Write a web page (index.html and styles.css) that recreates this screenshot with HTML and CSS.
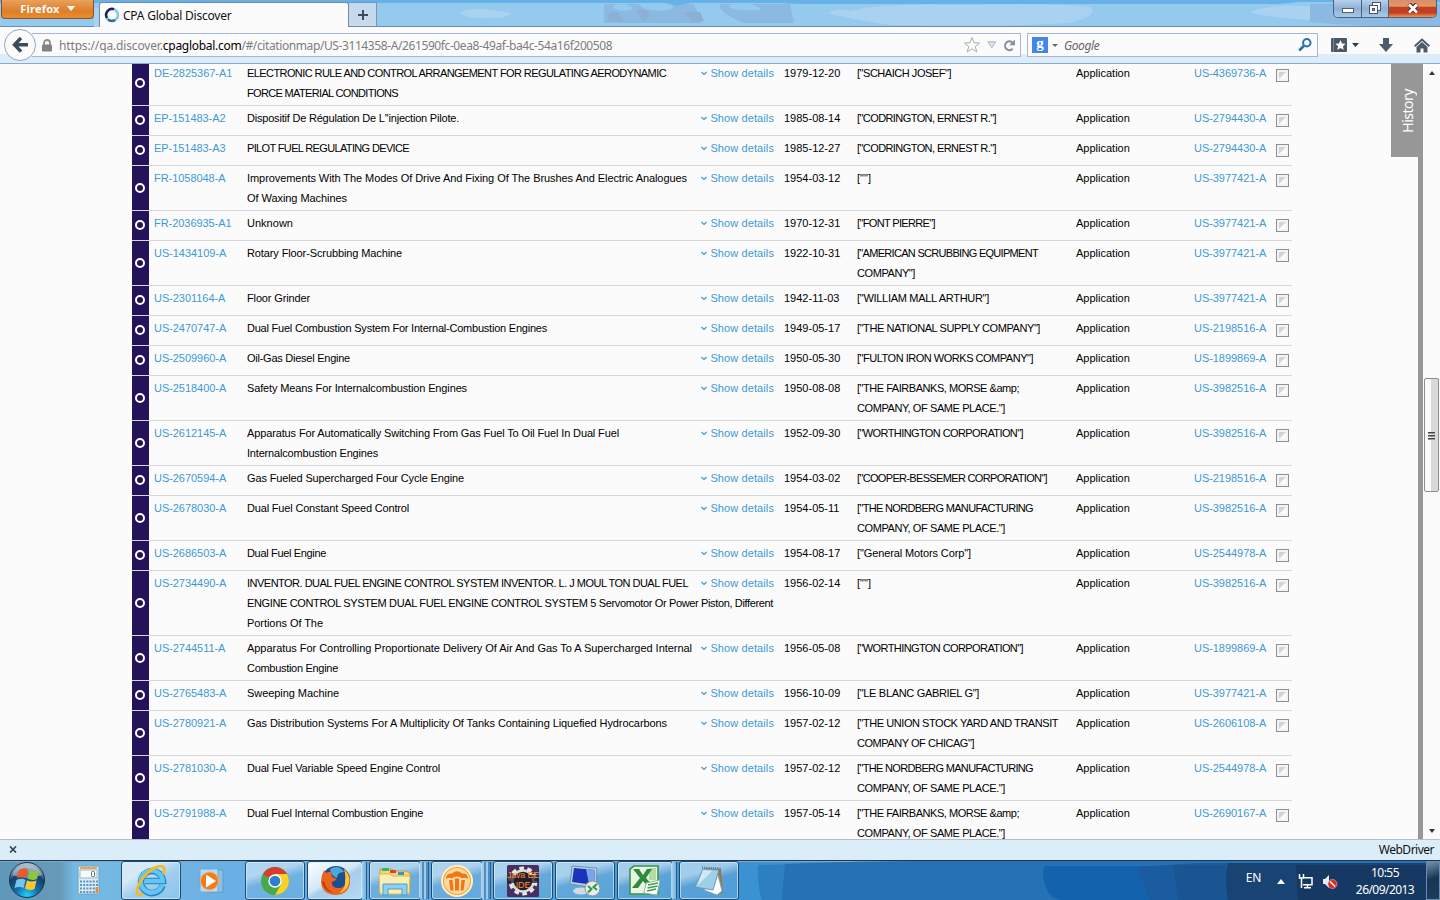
FILE: index.html
```html
<!DOCTYPE html>
<html lang="en">
<head>
<meta charset="utf-8">
<title>CPA Global Discover</title>
<link rel="stylesheet" href="styles.css">
</head>
<body>
<div class="screen">
  <header class="titlebar">
    <svg class="clouds" width="1440" height="27" viewBox="0 0 1440 27" preserveAspectRatio="none">
      <path fill="#a9d1f0" d="M94 8h18v19H94zM460 13q6-6 32-3l20 3q-4 5-20 5-26 1-32-5zM828 13q8-6 22-2 30-8 110-6 100-2 130 2 10 8-20 16-60 4-180 2-40-6-62-12zM1250 12q20-8 60-6 20 8 0 14-40-2-60-8z"/>
      <path fill="#8bb9e2" d="M604 4h90l8 19h-98zM720 4h70l4 19h-50q-26-10-24-19zM1310 4h130v22h-60q-40-1-70-4z"/>
      <path fill="#94caee" d="M612 6q10-4 18 0t-8 5q-8-1-10-5zM638 4h34q4 6-10 7-18 0-24-7zM728 6q14-6 28 0t-14 4q-10 0-14-4z"/>
      <path fill="#8eafd4" d="M607 14q8-4 12 0l6 8h-16zM636 10q12-2 14 6l-8 6q0-6-6-12zM684 12l16 0 4 9-12 2z"/>
      <path fill="#67b1ea" d="M0 0h1440v2H1300l-20 2H800l-20-1H690l-14 3-10-3H0z"/>
    </svg>
    <div class="firefox-btn"><span>Firefox</span><i class="tri tri-white"></i></div>
    <div class="tab">
      <svg width="16" height="16" viewBox="0 0 16 16" fill="none"><circle cx="8" cy="8" r="6" stroke="#8cc6e4" stroke-width="2.6"/><path d="M10 2.2A6 6 0 0 0 3 11" stroke="#1d2250" stroke-width="2.4"/><path d="M4 12.500A6 6 0 0 0 11 13" stroke="#2c6c9c" stroke-width="2.400"/></svg>
      <span>CPA Global Discover</span>
    </div>
    <div class="newtab"><svg width="12" height="12"><path d="M6 1v10M1 6h10" stroke="#3d4c5e" stroke-width="2"/></svg></div>
    <div class="winctl">
      <div class="wc wc-min"><svg width="14" height="10"><rect x="1.500" y="3.500" width="11" height="4" fill="#fff" stroke="#555f70"/></svg></div>
      <div class="wc wc-max"><svg width="14" height="13" fill="#fff" stroke="#4a5568"><rect x="4.500" y=".5" width="8" height="8"/><rect x="1.500" y="3.500" width="8" height="8"/><rect x="4.500" y="6.500" width="2" height="2" fill="#8fb2d8"/></svg></div>
      <div class="wc wc-close"><svg width="14" height="11"><path d="M3 1l8 8M11 1l-8 8" stroke="#553336" stroke-width="4.500"/><path d="M3 1.500l8 8M11 1.500l-8 8" stroke="#fff" stroke-width="2.600"/></svg></div>
    </div>
  </header>

  <nav class="navbar">
    <div class="back"><svg width="18" height="18" viewBox="0 0 18 18" fill="none" stroke="#3d4b5c" stroke-width="3.400"><path d="M10 2L3.500 8.700l6.500 7M4 8.700h13"/></svg></div>
    <div class="urlbar">
      <svg class="lock" width="10" height="13"><path d="M2 6V4a3 3 0 0 1 6 0v2" fill="none" stroke="#8b8b8b" stroke-width="1.800"/><rect y="5.500" width="10" height="7" rx="1" fill="#828282"/></svg>
      <span class="url">https://qa.discover.<b>cpaglobal.com</b><span class="path">/#/citationmap/US-3114358-A/261590fc-0ea8-49af-ba4c-54a16f200508</span></span>
      <svg class="star" width="18" height="18" viewBox="0 0 18 18"><path d="M9 1.500l2 5.300 5.600.2-4.400 3.400 1.600 5.600L9 12.800 4.200 16l1.600-5.600L1.400 7 7 6.800z" fill="#fff" stroke="#a5adb8"/></svg>
      <svg class="dd" width="10" height="8"><path d="M.8.800h8L4.800 6.800z" fill="#d3e6f6" stroke="#a9b4c0"/></svg>
      <svg class="reload" width="13" height="13" viewBox="0 0 13 13"><path d="M9.600 9.800A4.400 4.400 0 1 1 9.300 3.400" fill="none" stroke="#848f9e" stroke-width="2"/><path d="M12 .5v5.800H6.200z" fill="#848f9e"/></svg>
    </div>
    <div class="searchbar">
      <span class="gicon">g</span><i class="tri tri-grey"></i><span class="ph">Google</span>
      <svg width="14" height="14" viewBox="0 0 14 14" fill="none" stroke="#2d6fb0"><circle cx="8.800" cy="4.800" r="3.700" stroke-width="2"/><path d="M6 7.800L1.200 12.500" stroke-width="2.600"/></svg>
    </div>
    <svg class="bm" width="28" height="16" viewBox="0 0 28 16"><rect width="16" height="14" y="1" rx="1" fill="#4b5868"/><path d="M2.500 1v14" stroke="#76869a"/><path d="M9.500 3l1.500 3.400 3.600.4-2.700 2.400.8 3.600-3.200-1.900-3.200 1.900.8-3.600L4.400 6.800 8 6.400z" fill="#fff"/><path d="M21 6h7l-3.500 4z" fill="#2e3948"/></svg>
    <svg class="dl" width="14" height="14"><path d="M4 0h6v6h4l-7 8-7-8h4z" fill="#4d5a6a"/></svg>
    <svg class="home" width="16" height="15" viewBox="0 0 16 15"><path d="M.7 8.300L8 1.500l7.300 6.800" fill="none" stroke="#4d5a6a" stroke-width="2"/><path d="M2.500 9L8 4l5.500 5v5.500h-4v-4h-3v4h-4z" fill="#4d5a6a"/></svg>
  </nav>

  <main class="page">
    <div class="list" id="list"></div>
    <div class="side"><div class="history"><span>History</span></div></div>
    <div class="scroll">
      <i class="up"></i>
      <div class="thumb"><i></i><i></i><i></i></div>
      <i class="down"></i>
    </div>
  </main>

  <footer class="addon">
    <svg width="8" height="7"><path d="M1 .5l6 6M7 .5l-6 6" stroke="#3c4450" stroke-width="1.700"/></svg>
    <span>WebDriver</span>
  </footer>

  <div class="taskbar">
    <svg class="tint" width="1440" height="40" viewBox="0 0 1440 40"><path fill="#2c7fc1" d="M758 5l80-2 80-2h522v39H762q-4-10-4-35z"/><path fill="#2571b6" d="M785 4q70-3 150-3h505v39H782z"/><path fill="#1262ad" d="M1044 6h396v34h-380l-8-3q-12-14-8-31z"/><path fill="#1b5ca1" d="M1137 7l60-4h243v37h-290z"/><path fill="#195592" d="M1173 5h267v35h-262z"/><path fill="#174473" d="M1228 3h212v37h-212q-4-20 0-37z"/><path fill="#163963" d="M1296 5h144v35h-142z"/></svg>
    <div class="start">
      <svg width="38" height="38" viewBox="0 0 38 38"><defs><radialGradient id="orb" cx=".5" cy=".95" r=".9"><stop offset="0" stop-color="#22d4ff"/><stop offset=".35" stop-color="#1571ad"/><stop offset=".7" stop-color="#173e66"/><stop offset="1" stop-color="#a8bfcf"/></radialGradient></defs><circle cx="19" cy="19" r="17.500" fill="url(#orb)" stroke="#17364f"/><path d="M4 14a15.500 13 0 0 1 30 0q-15 6-30 0z" fill="#d5e3ee" opacity=".45"/><path d="M11 9q5-3 9-.5l-2 8.500q-4-2-9 0z" fill="#ee5a24"/><path d="M21.500 9.500q5 2 9.500-.5l-2 9q-5 2-9.500-.5z" fill="#8cc63e"/><path d="M8.500 19q5-2.500 9 0L15.500 27q-4-2-9 0z" fill="#79c3ee"/><path d="M19 19.500q5 2 9.500 0L26.500 28q-5 2-9.500-.5z" fill="#fdc82f"/></svg>
    </div>
    <div class="quick calc">
      <svg width="24" height="31" viewBox="0 0 24 31"><rect x="1" y="1" width="21" height="28" rx="1.500" fill="#d9ecf8" stroke="#6e9fc4"/><rect x="3" y="2" width="17" height="2" fill="#e9a452"/><rect x="3" y="5" width="17" height="8" fill="#f6fafc" stroke="#9bb"/><rect x="14.500" y="6.500" width="3" height="5" rx="1" fill="none" stroke="#667"/><path d="M3 16.500h18M3 20h18M3 23.500h15M3 27h15" stroke="#5f93bd" stroke-width="2" stroke-dasharray="2 1.200"/><path d="M18.500 22h2.500v6h-2.500z" fill="#f08a24"/></svg>
    </div>
    <div class="task ie">
      <svg width="32" height="32" viewBox="0 0 32 32"><path d="M27.500 20.500A11 11 0 1 1 28 16H10" fill="none" stroke="#2482c4" stroke-width="6.500"/><path d="M27 20.500A11 11 0 1 1 27.700 16H10" fill="none" stroke="#61c6f1" stroke-width="4.600"/><path d="M8 29C0 33 0 24 8 13S27-1 29 3q1 2-1 6" fill="none" stroke="#f3b927" stroke-width="2.800"/></svg>
    </div>
    <div class="quick wmp">
      <svg width="28" height="28" viewBox="0 0 28 28"><path d="M9 2l15 1v22L9 26z" fill="#8dc0e3" stroke="#5c9bc9"/><path d="M1 2h18v23H1z" fill="#b7dcf2" stroke="#70aad4"/><circle cx="10.500" cy="14" r="9" fill="#f07c1b" stroke="#f9b169"/><path d="M7 7.500v13L17 14z" fill="#fff"/></svg>
    </div>
    <div class="task chrome">
      <svg width="30" height="30" viewBox="0 0 30 30"><circle cx="15" cy="15" r="14" fill="#4aa84c"/><path d="M15 15L2.900 8A14 14 0 0 1 27.100 8H15z" fill="#db3a2e"/><path d="M15 8h12.100A14 14 0 0 1 15 29l6-10.500z" fill="#fbd12a"/><circle cx="15" cy="15" r="6.700" fill="#fff"/><circle cx="15" cy="15" r="5.300" fill="#2a7fd0"/></svg>
    </div>
    <div class="task fx stack">
      <svg width="32" height="32" viewBox="0 0 32 32"><circle cx="17" cy="15" r="14" fill="#1f4d92"/><path d="M11 4q9-5 14 3-7 0-7 6-6-2-7-9z" fill="#4aa8db"/><path d="M25 4q7 6 6 14-2 12-15 12Q3 29 2 17 2 11 5 5l2 3q3-2 6-1-2 4 2 6 3 0 2 2l-4 2q-1 5 5 6 8 1 9-7 1-6-2-12z" fill="#ea6420"/><path d="M25 4q8 8 4 17-3 6-9 7 7-5 6-12 1-6-1-12z" fill="#f9c733"/><path d="M3 17q3 11 13 11-9-2-11-12z" fill="#b83819"/></svg>
    </div>
    <div class="task exp stack">
      <svg width="34" height="30" viewBox="0 0 34 30"><path d="M2 3h12l2 2h12l4 2v20H2z" fill="#f3d675" stroke="#c29c42"/><path d="M4 2h7v3H4z" fill="#3b5"/><path d="M12 4h6v3h-6z" fill="#d43"/><path d="M20 6h6v3h-6z" fill="#39c"/><path d="M1 8h11l2 2h18l-1 18H2z" fill="#fbeeb2" stroke="#d8b85c"/><path d="M5 29V18h24v11h-5v-6H10v6z" fill="#8fd0ee" stroke="#4e9dc6"/></svg>
    </div>
    <div class="task nitro stack stack2">
      <svg width="32" height="32" viewBox="0 0 32 32"><circle cx="16" cy="16" r="15" fill="#f5a02c" stroke="#fff0c8" stroke-width="2"/><circle cx="16" cy="16" r="13" fill="#fcd9a0"/><path d="M5 14q0-6 6-5.500 5-4.500 10 0 6-.5 6 5.500-3-2-5.500-.5-2.500-2-5.500-2t-5.500 2Q8 12 5 14z" fill="#f07714"/><path d="M8 15h3.500l1 10.500H9.500zM14 13.500h4v12h-4zM20.500 15H24l-1.500 10.500h-3z" fill="#f07714"/></svg>
    </div>
    <div class="task java">
      <div class="javaicon">
        <svg width="32" height="32" viewBox="0 0 32 32"><rect width="32" height="32" rx="1.500" fill="#47305f"/><circle cx="16" cy="16" r="12.500" fill="none" stroke="#e8e8e8" stroke-width="4" stroke-dasharray="4.500 3.350"/><circle cx="16" cy="16" r="10.500" fill="#231e2c" stroke="#ddd" stroke-width="2.500"/><path d="M0 10h32v8H0z" fill="#231e2c" opacity=".75"/></svg>
        <div class="javatext"><span>Java EE</span><span>IDE</span></div>
      </div>
    </div>
    <div class="task rdp">
      <svg width="32" height="34" viewBox="0 0 32 34"><ellipse cx="12" cy="27" rx="8" ry="3.500" fill="#d2d9e0"/><path d="M3 2l25 2-1 20L1 20z" fill="#b9d0e2" stroke="#7092ad"/><path d="M5 4l21 2-1 15L3 18z" fill="#1a33b8"/><path d="M17 5l9 1-1 15-5-1z" fill="#7aa5ea"/><circle cx="23.500" cy="24.500" r="7.500" fill="#e8eaec" stroke="#8c9299"/><path d="M19 22l3.500 3-3.500 3.500M28 20l-3.500 3L28 26" fill="none" stroke="#2d9a48" stroke-width="2"/></svg>
    </div>
    <div class="task xls stack">
      <svg width="32" height="32" viewBox="0 0 32 32"><path d="M1 4l4-3h24v28H1z" fill="#e9f5e4" stroke="#3c9446" stroke-width="1.600"/><path d="M20 3h7v12h-7z" fill="#b2dca2"/><path d="M4 4h6l4 6 4-6h5l-6 9 7 8h-6l-4-5-5 7H3l8-10z" fill="#2c8c3c"/><path d="M17 18l14-3-3 15-13-2z" fill="#fff" stroke="#8fb88a"/><path d="M19 20l10-2M18.500 23l10-2M18 26l9-2" stroke="#3f9a4c" stroke-width="1.300"/></svg>
    </div>
    <div class="task note">
      <svg width="32" height="32" viewBox="0 0 32 32"><path d="M11 3l17 1 2 24-6 2z" fill="#947b4a"/><path d="M24 6l5 20-5 4-13-5z" fill="#fff" stroke="#8fa4b4"/><path d="M10 4l16 1-6 20L2 22z" fill="#9fd0e6" stroke="#6597b5"/><path d="M10 5l9 1L4 21z" fill="#cfeaf4"/><path d="M9 2.500l19 1" stroke="#55738a" stroke-width="2" stroke-dasharray="1 1.200"/></svg>
    </div>
    <div class="tray">
      <span class="lang">EN</span>
      <svg class="arrow" width="8" height="5"><path d="M0 5l4-5 4 5z" fill="#fff"/></svg>
      <svg class="net" width="16" height="16" viewBox="0 0 16 16" fill="none" stroke="#fff" stroke-width="1.500"><path d="M1.500 0v4h4V0M3.500 4v10M6 3.700h8v7H5M6 13.800h7M9.500 11v3"/></svg>
      <svg class="vol" width="16" height="16" viewBox="0 0 16 16"><path d="M1 5h2l4-4v13l-4-4H1z" fill="#e9edf2"/><circle cx="10.500" cy="10" r="4.500" fill="#dd2a22" stroke="#f5b4ac" stroke-width=".6"/><path d="M8 7.500l5 5" stroke="#fff" stroke-width="1.600"/></svg>
      <div class="clock"><span>10:55</span><span>26/09/2013</span></div>
      <div class="peek"></div>
    </div>
  </div>
</div>
<script src="rows.js"></script>
</body>
</html>
```
FILE: styles.css
```css
* { box-sizing: border-box; }
body { margin: 0; font-family: "Liberation Sans", Arial, sans-serif; background: #fbfbfb; }
svg { display: block; flex: none; }
.screen { width: 1440px; height: 900px; overflow: hidden; display: flex; flex-direction: column; }

.tri { width: 0; height: 0; border: 4px solid transparent; border-bottom: 0; flex: none; }
.tri-white { border-top-color: #fff; border-top-width: 5px; }
.tri-grey { border-width: 3px; border-bottom: 0; border-top-color: #6b6b6b; }

/* title bar */
.titlebar { height: 27px; flex: none; display: flex; position: relative; background: #94caee; border-bottom: 1px solid #6f8ba8; font-family: "Noto Sans", sans-serif; }
.clouds { position: absolute; left: 0; top: 0; }
.titlebar > div { position: relative; }
.firefox-btn { margin-left: 1px; width: 93px; height: 19px; display: flex; align-items: center; justify-content: center; gap: 7px; background: linear-gradient(#e8a15c, #dd7f2a 60%, #e98b2e); border: 1px solid #8c5523; border-top: 0; border-radius: 0 0 4px 4px; color: #fff; font-size: 11px; font-weight: 700; padding-bottom: 2px; letter-spacing: .2px; }
.tab { margin-left: 5px; width: 250px; height: 25px; margin-top: 2px; background: #fbfbfb; border: 1px solid #6f8ba8; border-bottom: 0; border-radius: 3px 3px 0 0; display: flex; align-items: center; padding-left: 4px; gap: 3px; font-size: 12px; color: #111; letter-spacing: -.22px; }
.newtab { width: 28px; height: 24px; margin-top: 2px; border: 1px solid #7d95b4; border-left: 0; border-bottom: 0; background: linear-gradient(#bfdbf0, #c9d9ea); display: flex; align-items: center; justify-content: center; }
.winctl { margin-left: auto; margin-right: 3px; height: 18px; display: flex; border: 1px solid #4d607a; border-top: 0; border-radius: 0 0 5px 5px; overflow: hidden; }
.wc { display: flex; align-items: center; justify-content: center; background: linear-gradient(#b6d1ea, #8eb0d6 50%, #a9cbe8); border-right: 1px solid #4d607a; }
.wc-min { width: 28px; padding-top: 3px; }
.wc-max { width: 27px; padding-bottom: 1px; }
.wc-close { width: 47px; border-right: 0; background: linear-gradient(#d98b74, #e39b5c 36%, #c0402a 44%, #c53e22 75%, #ee9a4c); padding-bottom: 1px; }

/* navigation bar */
.navbar { height: 37px; flex: none; display: flex; align-items: flex-start; background: linear-gradient(#fbfbfb 27px, #dbedf9 27px); border-bottom: 1px solid #8fa9cc; font-family: "Noto Sans", sans-serif; }
.back { position: relative; z-index: 1; width: 32px; height: 32px; margin: 2px 0 0 4px; border: 1px solid #8fa9cc; border-radius: 50%; background: #fbfbfb; display: flex; align-items: center; justify-content: center; }
.urlbar { margin: 6px 0 0 -4px; width: 989px; height: 24px; border: 1px solid #a3b6d6; border-left: 0; background: #fbfbfb; display: flex; align-items: center; padding-left: 10px; font-size: 12px; color: #7d7d7d; }
.url { margin-left: 7px; width: 904px; white-space: nowrap; letter-spacing: -.15px; }
.url b { color: #000; font-weight: 400; letter-spacing: -.28px; }
.path { letter-spacing: -.4px; }
.dd { margin-left: 6px; }
.reload { margin-left: 6px; }
.searchbar { margin: 6px 0 0 6px; width: 291px; height: 24px; border: 1px solid #a3b6d6; background: #fbfbfb; display: flex; align-items: center; padding: 0 5px 0 4px; font-size: 12px; }
.gicon { width: 16px; height: 16px; background: #4384ef; color: #fff; font: 700 15px/12px "Liberation Serif", serif; text-align: center; }
.searchbar .tri { margin-left: 4px; }
.ph { margin-left: 6px; flex: 1; font-style: italic; color: #666; letter-spacing: -.4px; }
.bm { margin: 10px 0 0 13px; }
.dl { margin: 11px 0 0 20px; }
.home { margin: 11px 0 0 21px; }

/* page */
.page { height: 775px; flex: none; overflow: hidden; display: flex; background: #fbfbfb; }
.list { width: 1160px; margin: -3px 0 0 132px; flex: none; }
.row { display: grid; grid-template-columns: 17px 98px 527px 83px 219px 118px 80px 18px; min-height: 30px; border-bottom: 1px solid #d8d8d8; font-size: 11px; line-height: 20px; color: #000; }
.row > div { padding-top: 2px; padding-bottom: 2px; white-space: nowrap; }
.row .strip { background: #24125a; display: flex; align-items: center; justify-content: center; padding: 0 2px 1px 0; }
.ring { width: 10px; height: 10px; border: 2px solid #fff; border-radius: 50%; }
.link, .row .more { color: #4199d4; }
.link { letter-spacing: -.05px; }
.row .num { padding-left: 5px; }
.row .date { padding-left: 10px; }
.more { float: right; display: flex; align-items: center; gap: 3px; letter-spacing: .1px; }
.row .check { padding-left: 2px; }
.box { margin-top: 6px; width: 13px; height: 13px; border: 1px solid #8f8f8f; background: linear-gradient(135deg, #d0d3d8 45%, #fbfbfb 55%); box-shadow: inset 0 0 0 2px #f4f4f4; }
.side { margin-left: 99px; width: 32px; border-right: 5px solid #979797; }
.history { width: 32px; height: 93px; background: #979797; color: #fff; display: flex; align-items: center; justify-content: center; }
.history span { writing-mode: vertical-rl; transform: rotate(180deg); font: 14px "Noto Sans", sans-serif; letter-spacing: -.5px; }
.scroll { width: 17px; display: flex; flex-direction: column; align-items: center; padding: 7px 0 6px; }
.up { border: 3px solid transparent; border-top: 0; border-bottom: 4px solid #333; }
.down { border: 3px solid transparent; border-bottom: 0; border-top: 4px solid #333; margin-top: auto; }
.thumb { margin-top: 303px; width: 15px; height: 114px; border: 1px solid #8e8e8e; border-radius: 2px; background: linear-gradient(90deg, #fbfbfb 45%, #dadada 45%); display: flex; flex-direction: column; align-items: center; justify-content: center; gap: 2px; }
.thumb i { width: 7px; height: 1px; background: #444; box-shadow: 0 1px #999; }

/* add-on bar */
.addon { height: 21px; flex: none; border-top: 1px solid #b7bfca; background: #dbedf9; display: flex; align-items: center; justify-content: space-between; padding: 0 6px 1px 9px; font: 12px "Noto Sans", sans-serif; letter-spacing: -.5px; color: #111; }

/* taskbar */
.taskbar { height: 40px; flex: none; position: relative; display: flex; background: linear-gradient(90deg, #5f98b8, #6899b8 60px, #74b9e2 75px, #74b9e2 110px, #6aafe5 240px, #5ba3d8 500px, #3a92d2 740px); border-top: 1px solid #20374f; box-shadow: inset 0 1px #7fa9c9; }
.tint { position: absolute; left: 0; top: -1px; }
.taskbar > div { position: relative; }
.start { margin-left: 8px; width: 60px; }
.quick { width: 53px; padding: 4px 0 0 9px; }
.wmp { width: 64px; padding: 6px 0 0 18px; }
.task { height: 39px; width: 60px; margin-right: 2px; display: flex; align-items: center; justify-content: center; border: 1px solid #1e4b74; border-radius: 3px; box-shadow: inset 0 0 0 1px rgba(215, 238, 252, .65); background: linear-gradient(165deg, rgba(214, 234, 248, .65) 0 30%, rgba(130, 185, 225, .35) 50%, rgba(110, 180, 225, .35)); }
.task.ie { margin-right: 0; background: linear-gradient(150deg, #d6e9f7 0 30%, #a3cdec 55%, #84c7ef); }
.task.fx { width: 56px; margin-right: 6px; background: linear-gradient(150deg, #fff, #d5e8f7 45%, #a6cdec 55%, #b5daf3); }
.task.exp { width: 52px; margin-right: 10px; }
.task.nitro { width: 52px; margin-right: 10px; }
.task.xls { width: 56px; margin-right: 6px; }
.stack::after { content: ""; position: absolute; left: 100%; top: 0; width: 4px; height: 37px; border-right: 1px solid #2b5f8c; background: linear-gradient(90deg, #a8d2ee, #74b0dc); }
.exp.stack::after, .stack2::after { width: 8px; background: repeating-linear-gradient(90deg, #9fcbe9 0 2px, #4f8fc0 2px 4px); }
.javaicon { position: relative; width: 32px; height: 32px; }
.javatext { position: absolute; left: -2px; top: 5px; width: 36px; display: flex; flex-direction: column; align-items: center; font: 9px/10px "Liberation Sans", sans-serif; color: #ff8c2e; letter-spacing: -.2px; white-space: nowrap; }
.tray { margin-left: auto; display: flex; align-items: flex-start; color: #fff; font: 12px/16px "Noto Sans", sans-serif; }
.lang { margin-top: 9px; letter-spacing: -.3px; }
.arrow { margin: 18px 0 0 16px; }
.net { margin: 13px 0 0 13px; }
.vol { margin: 13px 0 0 8px; }
.clock { margin: 3px 0 0 14px; width: 66px; display: flex; flex-direction: column; align-items: center; line-height: 17px; letter-spacing: -.55px; }
.peek { margin-left: 8px; width: 14px; height: 39px; border: 1px solid #6b8cab; background: linear-gradient(160deg, #7294b0, #1a3553 45%, #1c3c60); }
```
FILE: rows.js
```js
// Each title and owner is a list of [line, width in px]; the tracking of a line is set to fill its width.
const rows = [
  ["DE-2825367-A1", [["ELECTRONIC RULE AND CONTROL ARRANGEMENT FOR REGULATING AERODYNAMIC", 419], ["FORCE MATERIAL CONDITIONS", 151]], "1979-12-20", [['["SCHAICH JOSEF"]', 94]], "US-4369736-A"],
  ["EP-151483-A2", [["Dispositif De Régulation De L''injection Pilote.", 212]], "1985-08-14", [['["CODRINGTON, ERNEST R."]', 139]], "US-2794430-A"],
  ["EP-151483-A3", [["PILOT FUEL REGULATING DEVICE", 162]], "1985-12-27", [['["CODRINGTON, ERNEST R."]', 139]], "US-2794430-A"],
  ["FR-1058048-A", [["Improvements With The Modes Of Drive And Fixing Of The Brushes And Electric Analogues", 440], ["Of Waxing Machines", 100]], "1954-03-12", [['[""]', 14]], "US-3977421-A"],
  ["FR-2036935-A1", [["Unknown", 46]], "1970-12-31", [['["FONT PIERRE"]', 78]], "US-3977421-A"],
  ["US-1434109-A", [["Rotary Floor-Scrubbing Machine", 155]], "1922-10-31", [['["AMERICAN SCRUBBING EQUIPMENT', 181], ['COMPANY"]', 58]], "US-3977421-A"],
  ["US-2301164-A", [["Floor Grinder", 63]], "1942-11-03", [['["WILLIAM MALL ARTHUR"]', 132]], "US-3977421-A"],
  ["US-2470747-A", [["Dual Fuel Combustion System For Internal-Combustion Engines", 300]], "1949-05-17", [['["THE NATIONAL SUPPLY COMPANY"]', 183]], "US-2198516-A"],
  ["US-2509960-A", [["Oil-Gas Diesel Engine", 103]], "1950-05-30", [['["FULTON IRON WORKS COMPANY"]', 176]], "US-1899869-A"],
  ["US-2518400-A", [["Safety Means For Internalcombustion Engines", 220]], "1950-08-08", [['["THE FAIRBANKS, MORSE &amp;', 162], ['COMPANY, OF SAME PLACE."]', 148]], "US-3982516-A"],
  ["US-2612145-A", [["Apparatus For Automatically Switching From Gas Fuel To Oil Fuel In Dual Fuel", 372], ["Internalcombustion Engines", 131]], "1952-09-30", [['["WORTHINGTON CORPORATION"]', 166]], "US-3982516-A"],
  ["US-2670594-A", [["Gas Fueled Supercharged Four Cycle Engine", 217]], "1954-03-02", [['["COOPER-BESSEMER CORPORATION"]', 190]], "US-2198516-A"],
  ["US-2678030-A", [["Dual Fuel Constant Speed Control", 162]], "1954-05-11", [['["THE NORDBERG MANUFACTURING', 176], ['COMPANY, OF SAME PLACE."]', 148]], "US-3982516-A"],
  ["US-2686503-A", [["Dual Fuel Engine", 79]], "1954-08-17", [['["General Motors Corp"]', 114]], "US-2544978-A"],
  ["US-2734490-A", [["INVENTOR. DUAL FUEL ENGINE CONTROL SYSTEM INVENTOR. L. J MOUL TON DUAL FUEL", 441], ["ENGINE CONTROL SYSTEM DUAL FUEL ENGINE CONTROL SYSTEM 5 Servomotor Or Power Piston, Different", 526], ["Portions Of The", 76]], "1956-02-14", [['[""]', 14]], "US-3982516-A"],
  ["US-2744511-A", [["Apparatus For Controlling Proportionate Delivery Of Air And Gas To A Supercharged Internal", 445], ["Combustion Engine", 91]], "1956-05-08", [['["WORTHINGTON CORPORATION"]', 166]], "US-1899869-A"],
  ["US-2765483-A", [["Sweeping Machine", 92]], "1956-10-09", [['["LE BLANC GABRIEL G"]', 122]], "US-3977421-A"],
  ["US-2780921-A", [["Gas Distribution Systems For A Multiplicity Of Tanks Containing Liquefied Hydrocarbons", 420]], "1957-02-12", [['["THE UNION STOCK YARD AND TRANSIT', 201], ['COMPANY OF CHICAG"]', 117]], "US-2606108-A"],
  ["US-2781030-A", [["Dual Fuel Variable Speed Engine Control", 193]], "1957-02-12", [['["THE NORDBERG MANUFACTURING', 176], ['COMPANY, OF SAME PLACE."]', 148]], "US-2544978-A"],
  ["US-2791988-A", [["Dual Fuel Internal Combustion Engine", 176]], "1957-05-14", [['["THE FAIRBANKS, MORSE &amp;', 162], ['COMPANY, OF SAME PLACE."]', 148]], "US-2690167-A"]
];

const lines = list => list.map(([text, width]) => `<span class="line" data-width="${width}">${text.replace(/&/g, "&amp;")}</span>`).join("<br>");
const chevron = '<svg width="6" height="5"><path d="M.5 1l2.500 2.500L5.500 1" fill="none" stroke="#4199d4" stroke-width="1.200"/></svg>';

document.getElementById("list").innerHTML = rows.map(([num, title, date, owner, cited]) => `
  <div class="row">
    <div class="strip"><span class="ring"></span></div>
    <div class="num link">${num}</div>
    <div class="title"><span class="more">${chevron}<span>Show details</span></span>${lines(title)}</div>
    <div class="date">${date}</div>
    <div class="owner">${lines(owner)}</div>
    <div class="type">Application</div>
    <div class="cited link">${cited}</div>
    <div class="check"><div class="box"></div></div>
  </div>`).join("");

document.querySelectorAll(".line").forEach(line => {
  const natural = line.getBoundingClientRect().width;
  line.style.letterSpacing = (line.dataset.width - natural) / line.textContent.length + "px";
});
```
